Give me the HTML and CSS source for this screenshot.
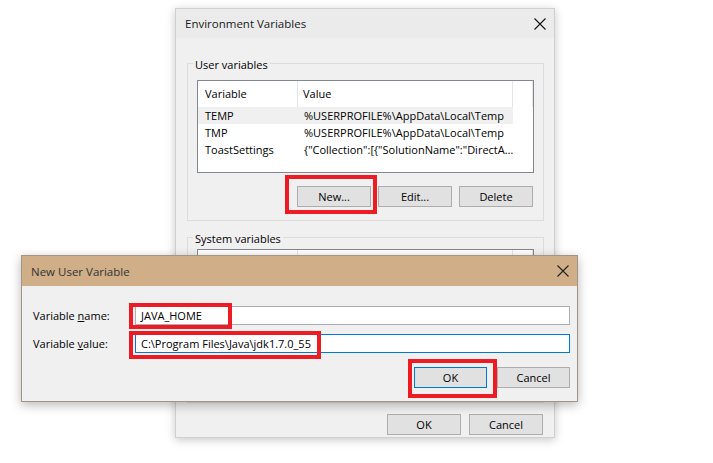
FILE: index.html
```html
<!DOCTYPE html>
<html>
<head>
<meta charset="utf-8">
<link rel="stylesheet" href="styles.css">
</head>
<body>
<div class="desktop">
  <section class="win env">
    <header class="titlebar">
      <span class="title">Environment Variables</span>
      <svg class="close" width="12" height="12" viewBox="0 0 12 12"><path d="M0.5 0.5 L11.5 11.5 M11.5 0.5 L0.5 11.5" stroke="#111" stroke-width="1.1" fill="none"/></svg>
    </header>
    <div class="body">
      <fieldset class="group user">
        <legend>User variables</legend>
        <div class="list">
          <div class="lrow head"><span class="c1">Variable</span><span class="c2">Value</span><span class="c3"></span></div>
          <div class="lrow sel"><span class="c1">TEMP</span><span class="c2">%USERPROFILE%\AppData\Local\Temp</span><span class="c3"></span></div>
          <div class="lrow"><span class="c1">TMP</span><span class="c2">%USERPROFILE%\AppData\Local\Temp</span><span class="c3"></span></div>
          <div class="lrow"><span class="c1">ToastSettings</span><span class="c2">{"Collection":[{"SolutionName":"DirectA…</span><span class="c3"></span></div>
        </div>
        <div class="btns">
          <button class="btn">New...</button>
          <button class="btn">Edit...</button>
          <button class="btn">Delete</button>
        </div>
      </fieldset>
      <fieldset class="group sys">
        <legend>System variables</legend>
        <div class="list sys-list">
          <div class="lrow head"><span class="c1">Variable</span><span class="c2">Value</span><span class="c3"></span></div>
        </div>
      </fieldset>
      <div class="btns foot">
        <button class="btn">OK</button>
        <button class="btn">Cancel</button>
      </div>
    </div>
  </section>

  <section class="win nuv">
    <header class="titlebar tan">
      <span class="title">New User Variable</span>
      <svg class="close" width="12" height="12" viewBox="0 0 12 12"><path d="M0.5 0.5 L11.5 11.5 M11.5 0.5 L0.5 11.5" stroke="#222" stroke-width="1.1" fill="none"/></svg>
    </header>
    <div class="form">
      <label class="lbl">Variable <u>n</u>ame:</label>
      <div class="input">JAVA_HOME</div>
      <label class="lbl">Variable <u>v</u>alue:</label>
      <div class="input focus">C:\Program Files\Java\jdk1.7.0_55</div>
      <div class="btns form-btns">
        <button class="btn default">OK</button>
        <button class="btn">Cancel</button>
      </div>
    </div>
  </section>

  <div class="mark m-new"></div>
  <div class="mark m-name"></div>
  <div class="mark m-value"></div>
  <div class="mark m-ok"></div>
</div>
</body>
</html>
```

FILE: styles.css
```css
* { box-sizing: border-box; }
html, body { margin: 0; padding: 0; background: #fff; }
body {
  font-family: "Open Sans", "Noto Sans", sans-serif;
  font-size: 11px;
  color: #000;
}
.desktop { position: relative; width: 713px; height: 463px; overflow: hidden; }

.win {
  position: absolute;
  background: #f0f0f0;
  display: flex;
  flex-direction: column;
}
.env {
  left: 175px; top: 8px; width: 380px; height: 430px;
  border: 1px solid #cfcfcf;
  box-shadow: 0 2px 9px rgba(0,0,0,0.22);
}
.nuv {
  left: 21px; top: 255px; width: 557px; height: 147px;
  border: 1px solid #a39583;
  box-shadow: 0 3px 10px rgba(0,0,0,0.28);
}

.titlebar {
  height: 29px;
  flex: none;
  display: flex;
  align-items: center;
  justify-content: space-between;
  padding: 0 8px 0 9px;
  background: #ebebeb;
}
.titlebar .title { font-size: 11.5px; color: #1a1a1a; }
.titlebar.tan { height: 30px; background: #cfae88; }
.titlebar.tan .title { color: #333; }
.close { display: block; }

.body {
  flex: 1;
  display: flex;
  flex-direction: column;
  padding: 15px 10px 12px 11px;
}

.group {
  margin: 0;
  border: 1px solid #dcdcdc;
  padding: 0 9px 13px 9px;
  min-width: 0;
}
.group legend {
  padding: 4px 2px 0;
  margin-left: -4px;
  line-height: 16px;
}
.user .list { margin-top: 7px; height: 93px; }
.sys { margin-top: 6px; flex: 1; margin-bottom: 11px; }
.sys .list { margin-top: 2px; height: 140px; }

.list {
  background: #fff;
  border: 1px solid #828790;
  overflow: hidden;
}
.lrow {
  display: grid;
  grid-template-columns: 100px 215px 1fr;
  height: 17px;
  line-height: 17px;
  white-space: nowrap;
}
.lrow span { overflow: hidden; }
.lrow .c1 { padding-left: 7px; }
.lrow .c2 { padding-left: 6px; }
.lrow.head { height: 26px; line-height: 25px; }
.lrow.head span { border-right: 1px solid #e5e5e5; }
.lrow.head .c1 { padding-left: 7px; }
.lrow.head .c2 { padding-left: 5px; }
.lrow.sel .c1, .lrow.sel .c2 { background: #f0f0f0; }

.btns {
  display: flex;
  justify-content: flex-end;
  gap: 7px;
}
.user .btns { margin-top: 13px; margin-right: 1px; }
.foot { gap: 8px; margin-right: 1px; }

.btn {
  width: 74px;
  height: 21px;
  padding: 0;
  border: 1px solid #adadad;
  background: #e1e1e1;
  font: inherit;
  color: #000;
  line-height: 19px;
}
.btn.default { border-color: #0078d7; }

.form {
  flex: 1;
  display: grid;
  grid-template-columns: 102px 1fr;
  grid-auto-rows: min-content;
  row-gap: 9px;
  padding: 20px 7px 0 11px;
}
.lbl { line-height: 19px; }
.input {
  height: 19px;
  line-height: 17px;
  background: #fff;
  border: 1px solid #abadb3;
  padding-left: 5px;
  white-space: nowrap;
}
.input.focus { border-color: #0078d7; }
.form-btns {
  grid-column: 1 / -1;
  gap: 10px;
  margin-top: 5px;
}
.form-btns .btn { width: 73px; }

.mark {
  position: absolute;
  border: 4px solid #ed1c24;
}
.m-new { left: 285px; top: 175px; width: 92px; height: 39px; }
.m-name { left: 129px; top: 303px; width: 103px; height: 26px; }
.m-value { left: 129px; top: 331px; width: 192px; height: 28px; }
.m-ok { left: 408px; top: 359px; width: 89px; height: 39px; }
```
